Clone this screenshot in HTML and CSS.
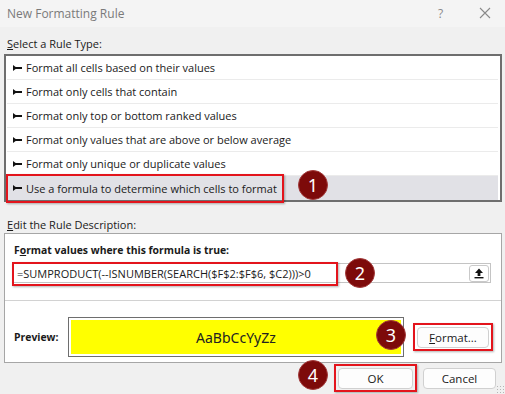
FILE: index.html
```html
<!DOCTYPE html>
<html lang="en">
<head>
    <meta charset="UTF-8">
    <title>New Formatting Rule</title>
    <link rel="stylesheet" href="styles.css">
</head>
<body>
    <div class="dialog">
        <div class="titlebar">
            <span class="title">New Formatting Rule</span>
            <span class="help">?</span>
            <span class="close">
                <svg width="12" height="12" viewBox="0 0 12 12"><path d="M1 1 L11 11 M11 1 L1 11" stroke="#8a8a8a" stroke-width="1.1" fill="none"/></svg>
            </span>
        </div>

        <div class="content">
            <div class="label"><u>S</u>elect a Rule Type:</div>
            <ul class="rule-list">
                <li><span class="bullet"></span>Format all cells based on their values</li>
                <li><span class="bullet"></span>Format only cells that contain</li>
                <li><span class="bullet"></span>Format only top or bottom ranked values</li>
                <li><span class="bullet"></span>Format only values that are above or below average</li>
                <li><span class="bullet"></span>Format only unique or duplicate values</li>
                <li class="selected">
                    <span class="bullet"></span>Use a formula to determine which cells to format
                    <span class="mark mark-rule"></span>
                    <span class="badge badge-1">1</span>
                </li>
            </ul>

            <div class="label label-edit"><u>E</u>dit the Rule Description:</div>
            <div class="group">
                <div class="group-top">
                    <div class="bold">F<u>o</u>rmat values where this formula is true:</div>
                    <div class="formula">
                        <span class="formula-text">=SUMPRODUCT(--ISNUMBER(SEARCH($F$2:$F$6, $C2)))&gt;0</span>
                        <span class="collapse">
                            <svg width="12" height="12" viewBox="0 0 12 12"><path d="M6 1.5 L10 6 L7.4 6 L7.4 9 L4.6 9 L4.6 6 L2 6 Z" fill="#111"/><rect x="1.5" y="10" width="9" height="1.4" fill="#111"/></svg>
                        </span>
                        <span class="mark mark-formula"></span>
                        <span class="badge badge-2">2</span>
                    </div>
                </div>
                <div class="preview-row">
                    <span class="bold">Preview:</span>
                    <div class="preview">
                        <div class="swatch">AaBbCcYyZz</div>
                        <span class="badge badge-3">3</span>
                    </div>
                    <span class="hl hl-format"><button class="btn btn-format"><u>F</u>ormat...</button></span>
                </div>
            </div>

            <div class="actions">
                <span class="badge badge-4">4</span>
                <span class="hl"><button class="btn btn-ok">OK</button></span>
                <button class="btn btn-cancel">Cancel</button>
            </div>
        </div>
        <span class="grip"></span>
    </div>
</body>
</html>
```

FILE: styles.css
```css
:root {
    --bg: #f0f0f0;
    --title-bg: #f4f4f4;
    --text: #1a1a1a;
    --muted: #7a7a7a;
    --list-border: #6e6e6e;
    --row-line: #ebebeb;
    --selected: #e1e1e6;
    --group-border: #a6a6a6;
    --red: #e3141c;
    --badge: #7d0a0a;
}

* {
    margin: 0;
    padding: 0;
    box-sizing: border-box;
}

body {
    background: var(--bg);
    font-family: 'Open Sans', 'Noto Sans', sans-serif;
    font-size: 11px;
    color: var(--text);
}

.dialog {
    position: relative;
    width: 505px;
    height: 394px;
    overflow: hidden;
}

.titlebar {
    height: 27px;
    background: var(--title-bg);
    display: flex;
    align-items: center;
    padding: 0 0 1px 7px;
    color: var(--muted);
    font-size: 12px;
}

.title {
    flex: 1;
}

.help {
    width: 12px;
    margin-right: 29px;
    font-size: 12px;
    color: #8a8a8a;
}

.close {
    display: flex;
    margin-right: 14px;
}

.content {
    padding: 0 3px 0 4px;
}

.label {
    height: 16px;
    line-height: 16px;
    margin-top: 9px;
    padding-left: 3px;
}

.label-edit {
    margin-top: 15px;
}

.rule-list {
    list-style: none;
    margin-top: 2px;
    border: 2px solid var(--list-border);
    background: #fff;
    padding: 0 2px 0 1px;
}

.rule-list li {
    position: relative;
    height: 24px;
    display: flex;
    align-items: center;
    border-bottom: 1px solid var(--row-line);
    padding-left: 6px;
    font-size: 11px;
}

.rule-list li.selected {
    background: var(--selected);
    border-bottom: none;
}

.bullet {
    position: relative;
    width: 9px;
    height: 6px;
    margin-right: 4px;
}

.bullet::before {
    content: "";
    position: absolute;
    left: 0;
    top: 0;
    border-left: 4px solid #111;
    border-top: 3px solid transparent;
    border-bottom: 3px solid transparent;
}

.bullet::after {
    content: "";
    position: absolute;
    left: 2px;
    top: 2px;
    width: 7px;
    height: 2px;
    background: #111;
}

.mark {
    position: absolute;
    border: 2px solid var(--red);
    box-shadow: 1px 1px 2px rgba(0, 0, 0, 0.3);
}

.mark-rule {
    left: -1px;
    top: -2px;
    width: 278px;
    height: 29px;
}

.badge {
    position: absolute;
    width: 30px;
    height: 30px;
    border-radius: 50%;
    background: var(--badge);
    border: 1px solid #a23a3a;
    color: #fff;
    font-family: 'Noto Sans', sans-serif;
    font-size: 18px;
    line-height: 28px;
    text-align: center;
}

.badge-1 {
    left: 291px;
    top: -6px;
}

.group {
    border: 1px solid var(--group-border);
    background: #fff;
    height: 130px;
}

.group-top {
    height: 67px;
    padding: 8px 10px 0 9px;
    border-bottom: 1px solid #d2d2d2;
}

.bold {
    font-weight: 700;
    font-size: 10.4px;
    height: 16px;
    line-height: 16px;
}

.formula {
    position: relative;
    margin: 5px 0 0 -1px;
    height: 20px;
    border: 1px solid #c4c4c4;
    display: flex;
    align-items: center;
    padding-left: 3px;
}

.formula-text {
    flex: 1;
    font-size: 11px;
}

.collapse {
    width: 20px;
    height: 17px;
    margin-right: 1px;
    border: 1px solid #c9c9c9;
    border-radius: 3px;
    background: #fff;
    display: flex;
    align-items: center;
    justify-content: center;
}

.mark-formula {
    left: -2px;
    top: -2px;
    width: 326px;
    height: 24px;
}

.badge-2 {
    left: 331px;
    top: -6px;
}

.preview-row {
    display: flex;
    align-items: center;
    height: 61px;
    padding: 16px 8px 5px 9px;
}

.preview-row .bold {
    width: 54px;
}

.preview {
    position: relative;
    width: 337px;
    height: 40px;
    border: 1px solid #6e6e6e;
    padding: 2px;
}

.swatch {
    height: 100%;
    background: #ffff00;
    display: flex;
    align-items: center;
    justify-content: center;
    font-family: 'Noto Sans', sans-serif;
    font-size: 14px;
    color: #222;
}

.badge-3 {
    left: 307px;
    top: 2px;
}

.hl {
    display: inline-flex;
    border: 2px solid var(--red);
    padding: 2px 2px 1px 2px;
    box-shadow: 1px 1px 2px rgba(0, 0, 0, 0.3);
}

.hl-format {
    margin-left: 9px;
}

.btn {
    height: 21px;
    border: 1px solid #d0d0d0;
    border-radius: 4px;
    background: #fdfdfd;
    font-family: 'Open Sans', 'Noto Sans', sans-serif;
    font-size: 11.5px;
    color: var(--text);
}

.btn-format {
    width: 72px;
}

.btn-ok {
    width: 75px;
}

.btn-cancel {
    width: 73px;
    margin-left: 6px;
}

.actions {
    position: relative;
    display: flex;
    align-items: center;
    justify-content: flex-end;
    padding-right: 6px;
    margin-top: 1px;
}

.badge-4 {
    left: 294px;
    top: -4px;
}

.grip {
    position: absolute;
    right: 1px;
    bottom: 1px;
    width: 8px;
    height: 8px;
    background-image: radial-gradient(circle, #b5b5b5 0.8px, transparent 1px);
    background-size: 3px 3px;
}
```
